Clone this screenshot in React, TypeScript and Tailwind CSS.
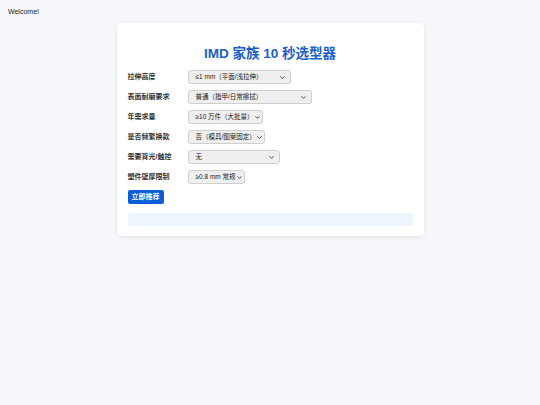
import { ChevronDown } from "lucide-react";

const rows = [
  { label: "拉伸高度", value: "≤1 mm（平面/浅拉伸）", width: "w-[103px]" },
  { label: "表面耐磨要求", value: "普通（指甲/日常擦拭）", width: "w-[124px]" },
  { label: "年需求量", value: "≥10 万件（大批量）", width: "w-[75px]" },
  { label: "是否频繁换款", value: "否（模具/图案固定）", width: "w-[77px]" },
  { label: "需要背光/触控", value: "无", width: "w-[92px]" },
  { label: "塑件壁厚限制", value: "≥0.8 mm 常规", width: "w-[57px]" },
];

const FakeSelect = ({ value, width }: { value: string; width: string }) => (
  <div
    className={`${width} h-[14px] flex items-center justify-between rounded-[3px] border border-[#cfcfcf] bg-[#efefef] pl-[7px] pr-[4px] text-[6.5px] text-[#222] whitespace-nowrap`}
  >
    <span>{value}</span>
    <ChevronDown size={7} strokeWidth={3} className="text-[#333] shrink-0" />
  </div>
);

const App = () => {
  return (
    <div
      className="min-h-[405px] bg-[#f5f7fa] px-2 pt-[8px] text-[#222]"
      style={{ fontFamily: '"Liberation Sans", "Noto Sans CJK SC", sans-serif' }}
    >
      <p className="text-[7px] leading-[8px]">Welcome!</p>

      <div className="mx-auto mt-[7px] w-[307px] rounded-[5px] bg-white px-[11px] pt-[23px] pb-[10px] shadow-[0_1px_4px_rgba(0,0,0,0.08)]">
        <h1 className="text-center text-[13.5px] leading-[16px] font-bold text-[#1a5ec8]">
          IMD 家族 10 秒选型器
        </h1>

        <div className="mt-[8px] flex flex-col gap-[6px]">
          {rows.map((row) => (
            <div key={row.label} className="flex items-center">
              <span className="w-[60px] text-[7px] font-semibold text-[#333]">{row.label}</span>
              <FakeSelect value={row.value} width={row.width} />
            </div>
          ))}
        </div>

        <button className="mt-[6px] block h-[14px] rounded-[2px] bg-[#0b5ed7] px-[4px] text-[7px] leading-[14px] font-semibold text-white">
          立即推荐
        </button>

        <div className="mt-[9px] h-[13px] rounded-[3px] bg-[#eef5fd]" />
      </div>
    </div>
  );
};

export default App;
